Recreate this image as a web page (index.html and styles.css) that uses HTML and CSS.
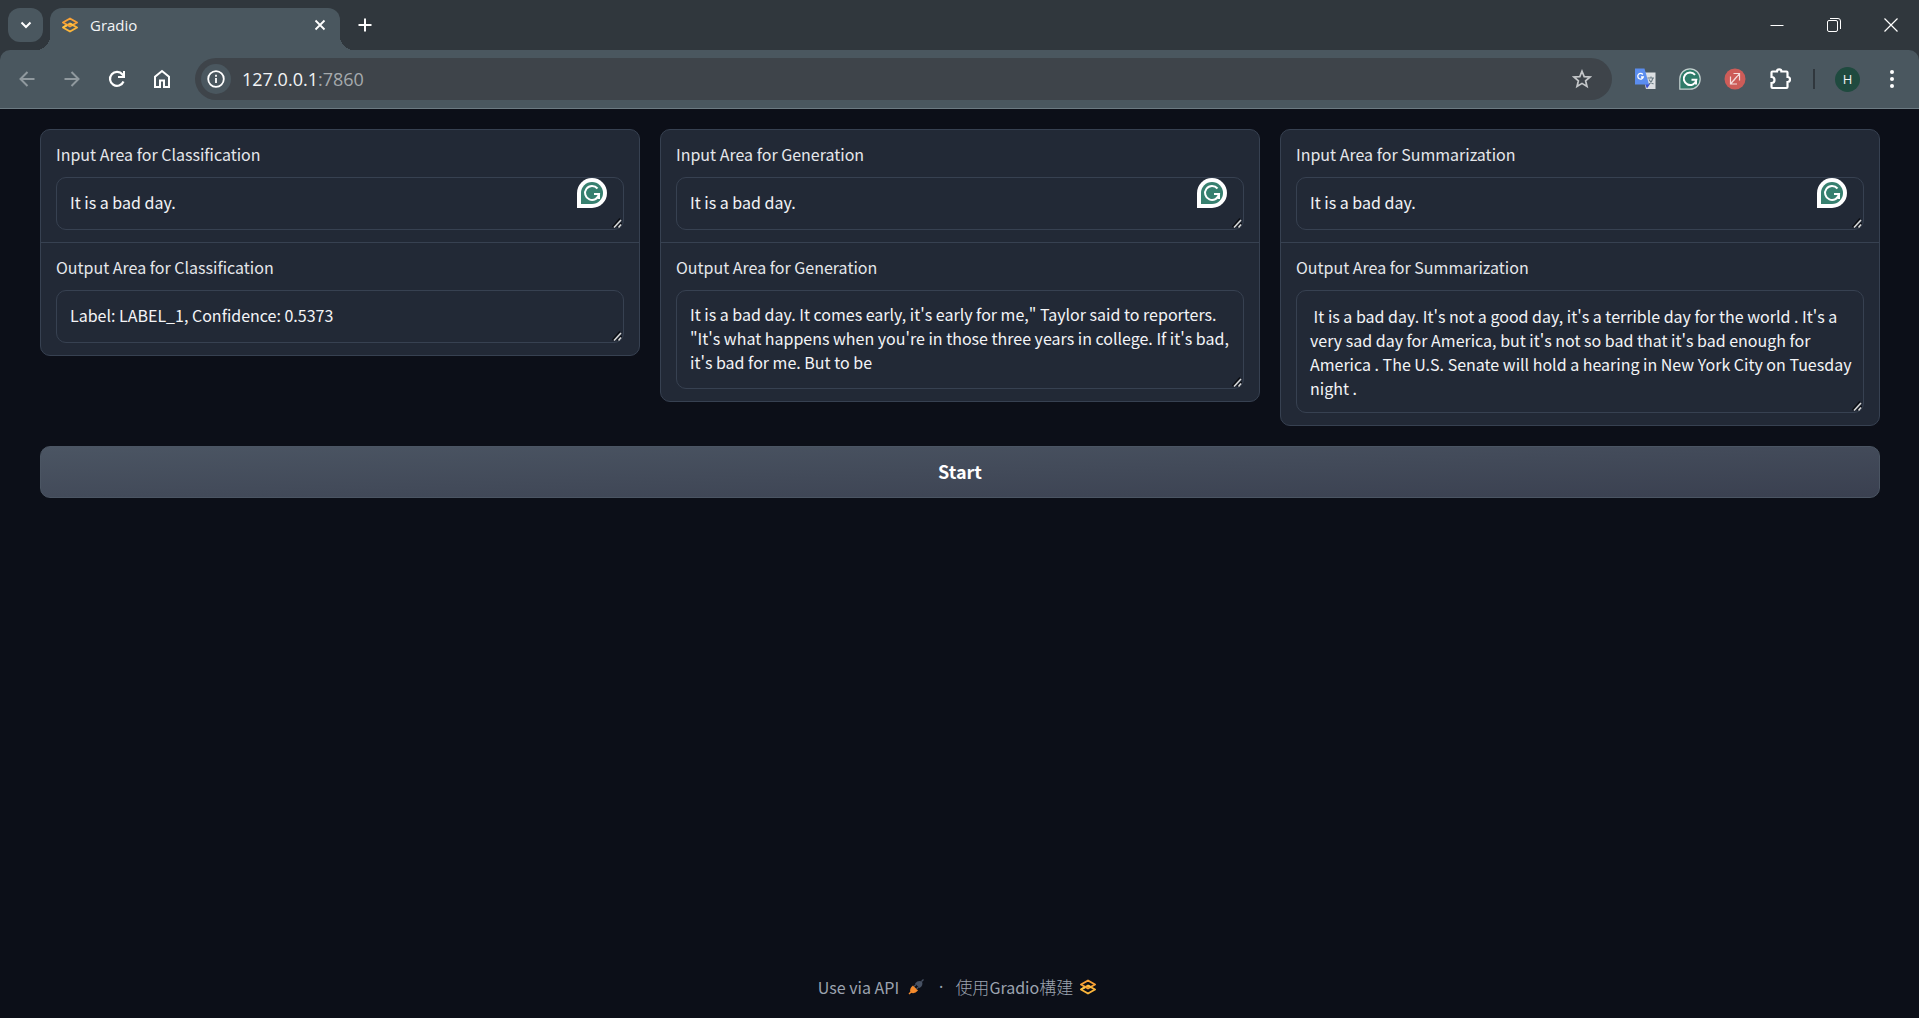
FILE: index.html
```html
<!DOCTYPE html>
<html lang="zh-Hant">
<head>
<meta charset="utf-8">
<meta name="viewport" content="width=device-width, initial-scale=1">
<title>Gradio</title>
<link rel="stylesheet" href="styles.css">
</head>
<body>
<svg class="defs" aria-hidden="true">
  <symbol id="gradio" viewBox="0 0 18 16">
    <path d="M9 6.500 16 10.500 9 14.500 2 10.500Z" fill="none" stroke="#fbb53a" stroke-width="2" stroke-linejoin="round"/>
    <path d="M9 1.500 16 5.500 9 9.500 2 5.500Z" fill="none" stroke="#f8a136" stroke-width="2" stroke-linejoin="round"/>
    <path d="m9 6.500 3.500 2M2 10.500l4-2.300" stroke="#fdc244" stroke-width="2"/>
  </symbol>
  <symbol id="grammarly" viewBox="0 0 32 32">
    <path d="M1 31V16a15 15 0 1 1 15 15Z" fill="#fff"/>
    <path d="M5 27V16a11 11 0 1 1 11 11Z" fill="#37806f"/>
    <path d="M21.500 11.500a7 7 0 1 0 1.500 5.500h-5M23 17v5" fill="none" stroke="#fff" stroke-width="2"/>
  </symbol>
</svg>

<header class="browser">
  <div class="tabstrip">
    <button class="tab-search" aria-label="Search tabs"><svg width="14" height="14" viewBox="0 0 14 14"><path d="m2.500 4.500 4.500 4.500 4.500-4.500" fill="none" stroke="#fff" stroke-width="2"/></svg></button>
    <div class="tab">
      <svg width="18" height="16"><use href="#gradio"/></svg>
      <span class="tab-title">Gradio</span>
      <button class="plain" aria-label="Close tab"><svg width="12" height="12" viewBox="0 0 12 12"><path d="m1.500 1.500 9 9m0-9-9 9" stroke="#fff" stroke-width="1.800"/></svg></button>
    </div>
    <button class="plain new-tab" aria-label="New tab"><svg width="14" height="14" viewBox="0 0 14 14"><path d="M7 0.500v13M.5 7h13" stroke="#fff" stroke-width="2"/></svg></button>
    <div class="window-buttons">
      <button class="plain" aria-label="Minimize"><svg width="14" height="14" viewBox="0 0 14 14"><path d="M.5 7.500h13" stroke="#fff"/></svg></button>
      <button class="plain" aria-label="Restore"><svg width="14" height="14" viewBox="0 0 14 14"><rect x=".5" y="2.500" width="10" height="11" rx="1.500" fill="none" stroke="#fff"/><path d="M3 .5h8a2.500 2.500 0 0 1 2.500 2.500v8" fill="none" stroke="#fff"/></svg></button>
      <button class="plain" aria-label="Close"><svg width="14" height="14" viewBox="0 0 14 14"><path d="m.5.5 13 13m0-13-13 13" stroke="#fff" stroke-width="1.200"/></svg></button>
    </div>
  </div>
  <div class="toolbar">
    <nav class="nav-buttons">
      <button class="plain" aria-label="Back"><svg width="18" height="16" viewBox="-1 0 18 16"><path d="M15.500 8H2M8.500 1 1.500 8l7 7" fill="none" stroke="#90999e" stroke-width="2"/></svg></button>
      <button class="plain" aria-label="Forward"><svg width="18" height="16" viewBox="-1 0 18 16"><path d="M.5 8H14M7.500 1l7 7-7 7" fill="none" stroke="#90999e" stroke-width="2"/></svg></button>
      <button class="plain" aria-label="Reload"><svg width="18" height="18" viewBox="0 0 18 18"><path d="M15.500 11.500A7 7 0 1 1 14.500 4.500L16 6" fill="none" stroke="#fff" stroke-width="2.200"/><path d="M17 1v7h-7V6h5V1Z" fill="#fff"/></svg></button>
      <button class="plain" aria-label="Home"><svg width="18" height="20" viewBox="0 0 18 20"><path d="M2 18V7.800L9 2l7 5.800V18h-5v-6.500H7V18Z" fill="none" stroke="#fff" stroke-width="2"/></svg></button>
    </nav>
    <div class="omnibox">
      <button class="site-info" aria-label="View site information"><svg width="18" height="18" viewBox="0 0 18 18"><circle cx="9" cy="9" r="7.800" fill="none" stroke="#fff" stroke-width="1.800"/><path d="M9 8v5M9 4.700v2" stroke="#fff" stroke-width="1.800"/></svg></button>
      <a class="url" href="#">127.0.0.1<span class="port">:7860</span></a>
      <button class="plain" aria-label="Bookmark this tab"><svg width="20" height="20" viewBox="0 0 20 20"><path d="m10 2.200 2.200 5.400 5.800.4-4.400 3.800 1.400 5.700-5-3.100-5 3.100 1.400-5.700L2 8l5.800-.4Z" fill="none" stroke="#c4c7c9" stroke-width="1.700"/></svg></button>
    </div>
    <div class="extensions">
      <button class="plain" aria-label="Google Translate"><svg width="22" height="22" viewBox="0 0 22 22"><path d="M8 4.500h13.500v16.500H12Z" fill="#dcdfe2"/><path d="M11 16h5l-3 4.500Z" fill="#3b4fd0"/><path d="M1 .5h9.500L15 16.500H1Z" fill="#5b8def"/><path d="M8.800 6.500A2.800 2.800 0 1 0 9.300 9H7" fill="none" stroke="#fff" stroke-width="1.300"/><path d="M13.500 10h6.500m-3-1.500V10m2 0q-1 4-4 6m0-4.500q1.500 3 4.500 4.500" fill="none" stroke="#6b7c85" stroke-width="1.100"/></svg></button>
      <button class="plain" aria-label="Grammarly"><svg width="22" height="22" viewBox="0 0 22 22"><path d="M.8 21.200V11A10.200 10.200 0 1 1 11 21.200Z" fill="#2f7b69" stroke="#c6d2d1" stroke-width="1.200"/><path d="M16 6.800a6.300 6.300 0 1 0 1.300 5H12.500M17 12v4.500" fill="none" stroke="#fff" stroke-width="2"/></svg></button>
      <button class="plain" aria-label="Extension"><svg width="22" height="22" viewBox="0 0 22 22"><circle cx="11" cy="11" r="10.500" fill="#cd5c58"/><path d="M9.500 5.500H15.500V12.500M6.500 8.500V16h6.500M15.500 5.500 9.500 13M6.500 16 13 8.500" fill="none" stroke="#f4dddc" stroke-width="1.200"/></svg></button>
      <button class="plain" aria-label="Extensions"><svg width="22" height="22" viewBox="0 0 22 22"><path d="M2.500 4.500q0-1 1-1h4.500a2.200 2.200 0 0 1 4.400 0H17.500q1 0 1 1V9a2.300 2.300 0 0 1 0 5v5q0 1-1 1H3.500q-1 0-1-1v-4a3 3 0 0 0 0-6Z" fill="none" stroke="#fff" stroke-width="2.200"/></svg></button>
      <span class="separator"></span>
      <button class="avatar">H</button>
      <button class="plain" aria-label="Menu"><svg width="6" height="20" viewBox="0 0 6 20"><circle cx="3" cy="3" r="2" fill="#fff"/><circle cx="3" cy="10" r="2" fill="#fff"/><circle cx="3" cy="17" r="2" fill="#fff"/></svg></button>
    </div>
  </div>
</header>

<main class="app">
  <div class="columns">
    <section class="card">
      <div class="block">
        <label for="in-class">Input Area for Classification</label>
        <div class="field"><textarea id="in-class" rows="1">It is a bad day.</textarea><svg class="badge"><use href="#grammarly"/></svg></div>
      </div>
      <div class="block">
        <label for="out-class">Output Area for Classification</label>
        <div class="field"><textarea id="out-class" rows="1">Label: LABEL_1, Confidence: 0.5373</textarea></div>
      </div>
    </section>
    <section class="card">
      <div class="block">
        <label for="in-gen">Input Area for Generation</label>
        <div class="field"><textarea id="in-gen" rows="1">It is a bad day.</textarea><svg class="badge"><use href="#grammarly"/></svg></div>
      </div>
      <div class="block">
        <label for="out-gen">Output Area for Generation</label>
        <div class="field"><textarea id="out-gen" class="three-lines" rows="3">It is a bad day. It comes early, it's early for me," Taylor said to reporters. "It's what happens when you're in those three years in college. If it's bad, it's bad for me. But to be</textarea></div>
      </div>
    </section>
    <section class="card">
      <div class="block">
        <label for="in-sum">Input Area for Summarization</label>
        <div class="field"><textarea id="in-sum" rows="1">It is a bad day.</textarea><svg class="badge"><use href="#grammarly"/></svg></div>
      </div>
      <div class="block">
        <label for="out-sum">Output Area for Summarization</label>
        <div class="field"><textarea id="out-sum" class="four-lines" rows="4"> It is a bad day. It's not a good day, it's a terrible day for the world . It's a very sad day for America, but it's not so bad that it's bad enough for America . The U.S. Senate will hold a hearing in New York City on Tuesday night .</textarea></div>
      </div>
    </section>
  </div>
  <button class="start">Start</button>
</main>

<footer class="footer">
  <a href="#">Use via API <svg class="plug" width="16" height="16" viewBox="0 0 16 16"><path d="m1 15 2-2" stroke="#f58a2c" stroke-width="1.500"/><path d="M2.500 13.500q-1.500-4 2.500-7l5 5q-3.500 4-7.500 2Z" fill="#f58a2c"/><path d="m7 4.500 4.500 4.500q4-2.500 2.500-6.500-4-1.500-7 2Z" fill="#475163"/><path d="m15.500.5-2 2M6 7.500l2-2M8.500 10l2-2" stroke="#475163" stroke-width="1.300"/></svg></a>
  <span class="dot">·</span>
  <a href="#"><span><span class="han">使用</span>Gradio<span class="han">構建</span></span> <svg width="18" height="16"><use href="#gradio"/></svg></a>
</footer>
</body>
</html>
```
FILE: styles.css
```css
* {
  box-sizing: border-box;
}

body {
  margin: 0;
  min-height: 100vh;
  display: flex;
  flex-direction: column;
  background: #0c0f18;
  color: #f3f4f6;
  font: 16px/24px "Noto Sans CJK TC", "Noto Sans", sans-serif;
}

button,
textarea {
  font: inherit;
  color: inherit;
}

a {
  color: inherit;
  text-decoration: none;
}

svg {
  display: block;
  flex: none;
}

.defs {
  position: absolute;
  width: 0;
  height: 0;
}

.plain {
  display: grid;
  place-items: center;
  padding: 0;
  border: 0;
  background: none;
}

/* Browser frame */

.browser {
  background: #30373d;
  font-family: "Open Sans", "Noto Sans", sans-serif;
}

.tabstrip {
  display: flex;
  height: 50px;
  padding: 8px 8px 0;
}

.tab-search {
  display: grid;
  place-items: center;
  width: 35px;
  height: 34px;
  padding: 0;
  border: 0;
  border-radius: 12px;
  background: #4a575f;
}

.tab {
  position: relative;
  display: flex;
  align-items: center;
  gap: 11px;
  width: 290px;
  margin-left: 7px;
  padding: 0 14px 8px 11px;
  border-radius: 12px 12px 0 0;
  background: #4a575f;
  font-size: 15px;
}

.tab::before,
.tab::after {
  content: "";
  position: absolute;
  bottom: 0;
  width: 14px;
  height: 14px;
}

.tab::before {
  right: 100%;
  background: radial-gradient(circle at 0 0, transparent 14px, #4a575f 14px);
}

.tab::after {
  left: 100%;
  background: radial-gradient(circle at 100% 0, transparent 14px, #4a575f 14px);
}

.tab-title {
  flex: 1;
}

.new-tab {
  width: 34px;
  height: 34px;
  margin-left: 8px;
}

.window-buttons {
  display: flex;
  gap: 43px;
  height: 34px;
  margin-left: auto;
  padding-right: 13px;
}

.toolbar {
  display: flex;
  align-items: center;
  height: 59px;
  padding: 0 24px 0 18px;
  border-bottom: 1px solid #6c7a82;
  border-radius: 10px 10px 0 0;
  background: #4a575f;
}

.nav-buttons {
  display: flex;
  gap: 27px;
}

.omnibox {
  display: flex;
  flex: 1;
  align-items: center;
  gap: 11px;
  height: 42px;
  margin-left: 24px;
  padding: 0 20px 0 6px;
  border-radius: 21px;
  background: #3e444a;
}

.site-info {
  display: grid;
  place-items: center;
  width: 30px;
  height: 30px;
  padding: 0;
  border: 0;
  border-radius: 50%;
  background: #4a575f;
}

.url {
  flex: 1;
  font-size: 18px;
}

.port {
  color: #a5aaad;
}

.extensions {
  display: flex;
  align-items: center;
  gap: 23px;
  margin-left: 22px;
}

.separator {
  width: 2px;
  height: 20px;
  margin-left: -1px;
  background: #30373d;
}

.avatar {
  width: 25px;
  height: 25px;
  margin: 0 6px 0 -3px;
  padding: 0;
  border: 0;
  border-radius: 50%;
  background: #1f4a3f;
  font-size: 13px;
}

/* App */

.app {
  flex: 1;
  padding: 20px 39px 20px 40px;
}

.columns {
  display: grid;
  grid-template-columns: repeat(3, 1fr);
  align-items: start;
  gap: 20px;
}

.card {
  border: 1px solid #374151;
  border-radius: 10px;
  background: #222936;
}

.block {
  padding: 12px 15px;
}

.block + .block {
  border-top: 1px solid #374151;
}

.block label {
  display: block;
  margin-bottom: 11px;
  color: #e5e7eb;
}

.field {
  position: relative;
}

textarea {
  display: block;
  width: 100%;
  height: 53px;
  padding: 12px 10px 12px 13px;
  border: 1px solid #374151;
  border-radius: 10px;
  background: transparent;
  overflow: hidden;
  resize: vertical;
}

textarea::-webkit-resizer {
  background: url("data:image/svg+xml,%3Csvg xmlns='http://www.w3.org/2000/svg' width='15' height='15'%3E%3Cpath d='M4.500 13 12 4.500M9.500 13.500l4-4.500' stroke='%230b0d12' stroke-width='1.500'/%3E%3Cpath d='M6 13.500 13 6M10.500 13.500l2.500-3' stroke='%23d8d8d8' stroke-width='1.500'/%3E%3C/svg%3E") right bottom no-repeat;
}

.three-lines {
  height: 99px;
  padding-top: 11px;
}

.four-lines {
  height: 123px;
  padding-top: 13px;
}

.badge {
  position: absolute;
  top: 0;
  right: 16px;
  width: 32px;
  height: 32px;
}

.start {
  width: 100%;
  height: 52px;
  margin-top: 20px;
  padding: 0 0 2px;
  border: 1px solid #4b5563;
  border-radius: 10px;
  background: linear-gradient(to bottom right, #4b5563, #3a4050);
  color: #fff;
  font-size: 18px;
  font-weight: 700;
}

.footer {
  display: flex;
  justify-content: center;
  gap: 12px;
  padding: 0 4px 19px 0;
  color: #9ca3af;
}

.footer a {
  display: flex;
  align-items: center;
  gap: 6px;
}

.dot {
  font-family: "Noto Sans", sans-serif;
}

.han {
  font-size: 17px;
  font-weight: 300;
}

.plug {
  margin: 0 3px;
}
```
